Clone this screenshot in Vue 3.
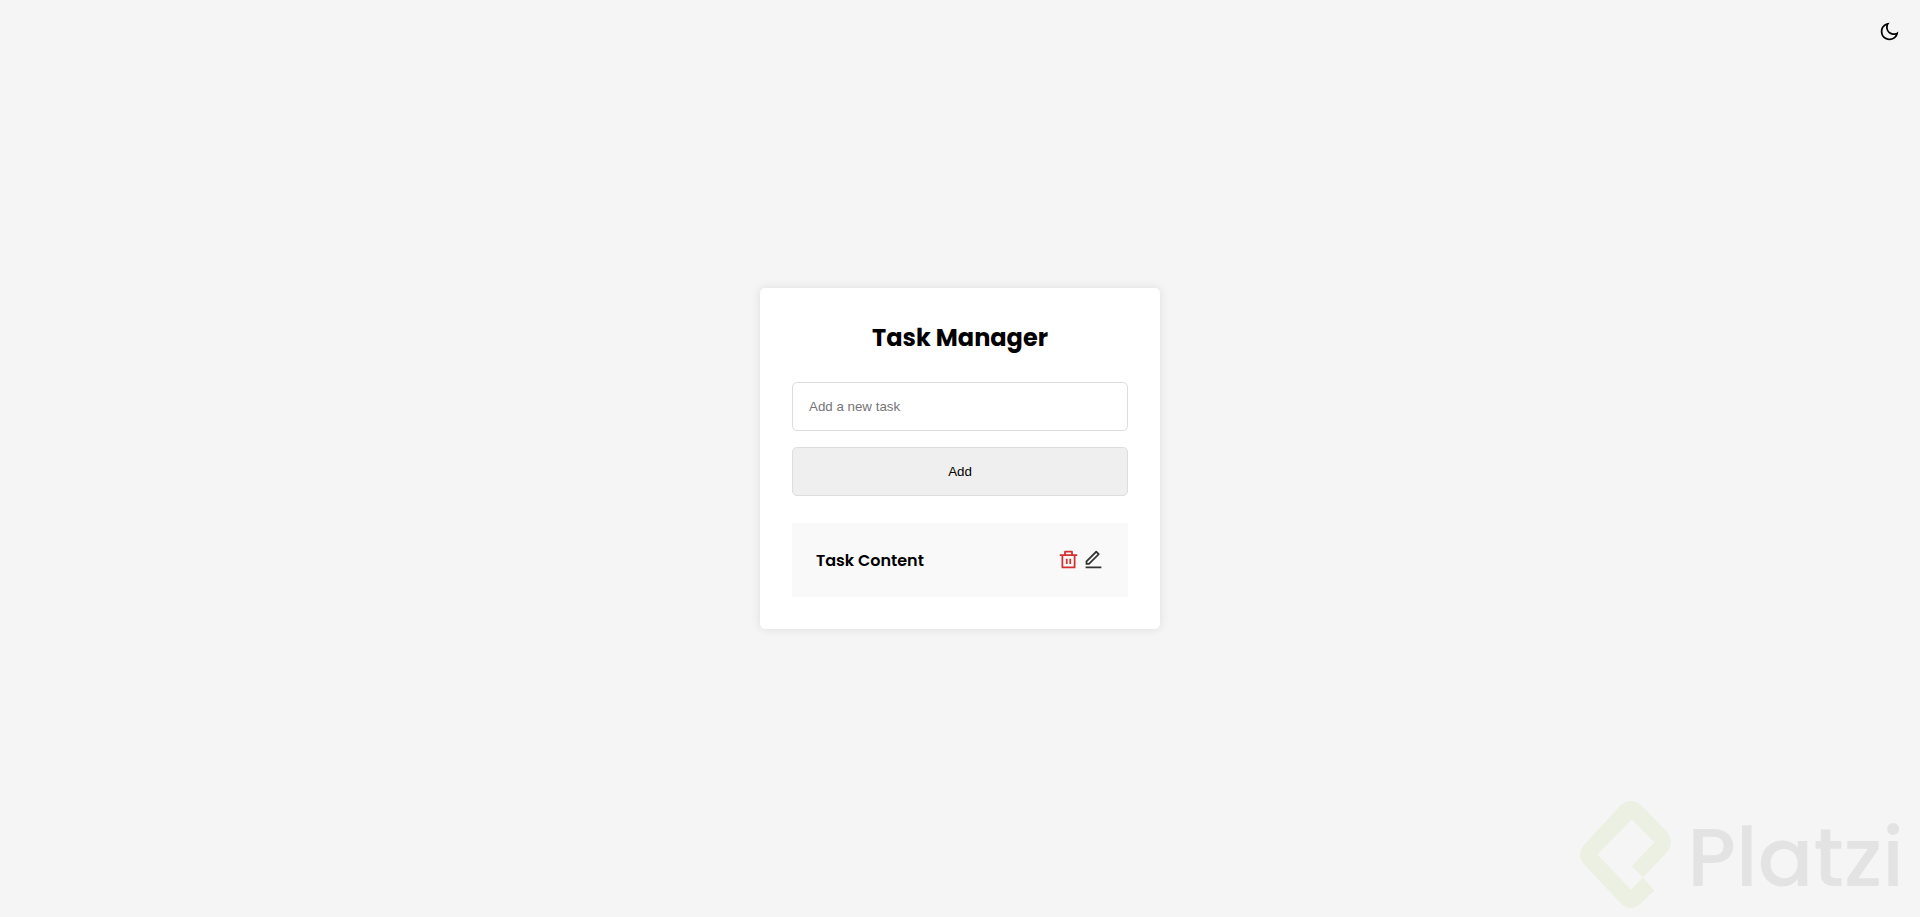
<script setup>
import { ref } from 'vue';

const newTask = ref('');
const darkMode = ref(false);
const tasks = ref([{ id: 1, text: 'Task Content' }]);

function addTask() {
  const text = newTask.value.trim();
  if (!text) return;
  tasks.value.push({ id: Date.now(), text });
  newTask.value = '';
}

function deleteTask(id) {
  tasks.value = tasks.value.filter((task) => task.id !== id);
}

// Puts the text back in the input so it can be changed
function editTask(task) {
  newTask.value = task.text;
  deleteTask(task.id);
}
</script>

<template>
  <div class="page" :class="{ dark: darkMode }">
    <button class="icon-button theme-toggle" type="button" aria-label="Toggle theme" @click="darkMode = !darkMode">
      <svg viewBox="0 0 24 24" fill="currentColor">
        <path d="M10 7a7 7 0 0 0 12 4.9v.1c0 5.523-4.477 10-10 10S2 17.523 2 12 6.477 2 12 2h.1A6.979 6.979 0 0 0 10 7zm-6 5a8 8 0 0 0 15.062 3.762A9 9 0 0 1 8.238 4.938 7.999 7.999 0 0 0 4 12z" />
      </svg>
    </button>

    <main class="card">
      <h1 class="title">Task Manager</h1>

      <form class="task-form" @submit.prevent="addTask">
        <input v-model="newTask" class="field" type="text" placeholder="Add a new task" aria-label="Add a new task" />
        <button class="field add-button" type="submit">Add</button>
      </form>

      <ul class="task-list">
        <li v-for="task in tasks" :key="task.id" class="task">
          <span class="task-text">{{ task.text }}</span>
          <div class="actions">
            <button class="icon-button delete" type="button" aria-label="Delete" @click="deleteTask(task.id)">
              <svg viewBox="0 0 24 24" fill="currentColor">
                <path d="M17 6h5v2h-2v13a1 1 0 0 1-1 1H5a1 1 0 0 1-1-1V8H2V6h5V3a1 1 0 0 1 1-1h8a1 1 0 0 1 1 1v3zm1 2H6v12h12V8zm-9 3h2v6H9v-6zm4 0h2v6h-2v-6zM9 4v2h6V4H9z" />
              </svg>
            </button>
            <button class="icon-button edit" type="button" aria-label="Edit" @click="editTask(task)">
              <svg viewBox="0 0 24 24" fill="currentColor">
                <path d="M6.414 16L16.556 5.858l-1.414-1.414L5 14.586V16h1.414zm.829 2H3v-4.243L14.435 2.322a1 1 0 0 1 1.414 0l2.829 2.829a1 1 0 0 1 0 1.414L7.243 18zM3 20h18v2H3v-2z" />
              </svg>
            </button>
          </div>
        </li>
      </ul>
    </main>

    <div class="watermark">
      <svg class="watermark-logo" viewBox="0 0 272 320" aria-hidden="true">
        <path d="M188 229L155 195L222 123L155 55L52 160L152 265L188 229L222 268L180 308Q152 332 124 308L12 190Q-12 160 12 131L122 12Q152 -12 182 12L260 92Q284 123 260 153Z" />
      </svg>
      <span class="watermark-name">Platzi</span>
    </div>
  </div>
</template>

<style>
body {
  margin: 0;
  background-color: #f5f5f5;
}
</style>

<style scoped>
.page {
  position: relative;
  display: flex;
  justify-content: center;
  align-items: center;
  min-height: 100vh;
  background-color: #f5f5f5;
  color: #000;
  font-family: Poppins, Inter, sans-serif;
}

.page.dark {
  background-color: #222;
}

.icon-button {
  width: 21px;
  height: 21px;
  padding: 0;
  border: none;
  background: none;
  color: inherit;
  cursor: pointer;
}

.icon-button svg {
  display: block;
  width: 100%;
  height: 100%;
}

.theme-toggle {
  position: absolute;
  top: 21px;
  right: 20px;
}

.dark .theme-toggle {
  color: #fff;
}

.card {
  box-sizing: border-box;
  width: 100%;
  max-width: 400px;
  padding: 32px;
  border-radius: 5px;
  background-color: #fff;
  box-shadow: 0 0 10px rgba(0, 0, 0, 0.1);
}

.title {
  margin: 0 0 26px;
  font-size: 24px;
  line-height: 36px;
  font-weight: 700;
  text-align: center;
}

.task-form {
  display: flex;
  flex-direction: column;
  gap: 16px;
}

.field {
  padding: 16px;
  border: 1px solid #ddd;
  border-radius: 5px;
  font-family: "Liberation Sans", Arial, sans-serif;
}

.add-button {
  background-color: #efefef;
  color: #000;
  cursor: pointer;
}

.task-list {
  margin: 27px 0 0;
  padding: 0;
  list-style: none;
}

.task {
  display: flex;
  justify-content: space-between;
  align-items: center;
  padding: 24px 24px 22px;
  background-color: #f9f9f9;
}

.task-text {
  font-size: 16px;
  line-height: 28px;
  font-weight: 600;
}

.actions {
  display: flex;
  gap: 4px;
  padding-bottom: 4px;
}

.delete {
  color: #d32f2f;
}

.edit {
  color: #333;
}

/* Brand mark over the bottom right corner */
.watermark {
  position: absolute;
  right: 16px;
  bottom: 9px;
  display: flex;
  align-items: center;
  gap: 16px;
  pointer-events: none;
}

.watermark-logo {
  width: 91px;
  height: 107px;
  fill: #ecf0e2;
}

.watermark-name {
  padding-top: 6px;
  color: #e3e3e3;
  font-size: 82px;
  line-height: 100px;
  font-weight: 500;
}
</style>
